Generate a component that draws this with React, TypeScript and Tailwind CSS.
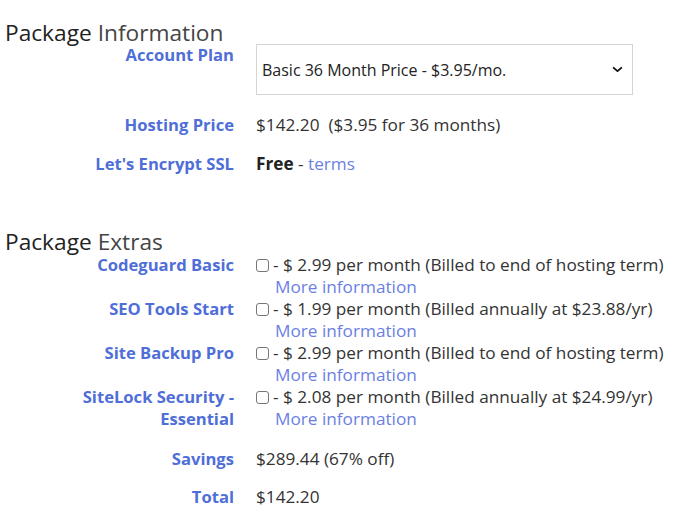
import React from 'react';

const extras = [
  { label: ['Codeguard Basic'], price: '2.99', note: 'Billed to end of hosting term' },
  { label: ['SEO Tools Start'], price: '1.99', note: 'Billed annually at $23.88/yr' },
  { label: ['Site Backup Pro'], price: '2.99', note: 'Billed to end of hosting term' },
  { label: ['SiteLock Security -', 'Essential'], price: '2.08', note: 'Billed annually at $24.99/yr' },
];

const Label: React.FC<{ children: React.ReactNode }> = ({ children }) => (
  <div className="text-right font-bold text-[16.6px] leading-[22px] text-[#4f6ed8]">{children}</div>
);

const Heading: React.FC<{ second: string; className?: string }> = ({ second, className }) => (
  <h2 className={`pl-[5px] text-[22.7px] leading-[20px] ${className ?? ''}`}>
    <span className="text-[#222]">Package</span> <span className="text-[#444]">{second}</span>
  </h2>
);

export default function App() {
  return (
    <div className="w-[679px] h-[520px] bg-white font-['Open_Sans',sans-serif] text-[17.2px] leading-[22px] text-[#333]">
      <Heading second="Information" className="pt-[23px]" />

      {/* Package info */}
      <div className="grid grid-cols-[234px_1fr] gap-x-[22px] mt-[1px]">
        <Label>Account Plan</Label>
        <div className="w-[377px] h-[51px] border border-[#d4d4d4] flex items-center justify-between pl-[5px] pr-[8px] text-[16px] text-[#222]">
          <span>Basic 36 Month Price - $3.95/mo.</span>
          <svg className="w-[13px] h-[13px]" viewBox="0 0 24 24" fill="none" stroke="#111" strokeWidth={3.5} strokeLinecap="round" strokeLinejoin="round">
            <path d="M5 9l7 6 7-6" />
          </svg>
        </div>

        <div className="mt-[19px]"><Label>Hosting Price</Label></div>
        <div className="mt-[19px]">$142.20&nbsp; ($3.95 for 36 months)</div>

        <div className="mt-[17px]"><Label>Let's Encrypt SSL</Label></div>
        <div className="mt-[17px]">
          <span className="font-bold text-[#222]">Free</span> - <span className="text-[#6b7fe3]">terms</span>
        </div>
      </div>

      <Heading second="Extras" className="mt-[57px]" />

      {/* Extras */}
      <div className="grid grid-cols-[234px_1fr] gap-x-[22px] mt-[2px]">
        {extras.map((x) => (
          <React.Fragment key={x.label[0]}>
            <Label>
              {x.label.map((l) => (
                <div key={l}>{l}</div>
              ))}
            </Label>
            <div className="whitespace-nowrap">
              <div className="flex items-center">
                <span className="w-[13px] h-[13px] border border-[#767676] rounded-[3px] bg-white mr-[4px] shrink-0" />
                <span>- $ {x.price} per month ({x.note})</span>
              </div>
              <div className="pl-[19px] text-[#6b7fe3]">More information</div>
            </div>
          </React.Fragment>
        ))}

        <div className="mt-[18px]"><Label>Savings</Label></div>
        <div className="mt-[18px]">$289.44 (67% off)</div>

        <div className="mt-[16px]"><Label>Total</Label></div>
        <div className="mt-[16px]">$142.20</div>
      </div>
    </div>
  );
}
